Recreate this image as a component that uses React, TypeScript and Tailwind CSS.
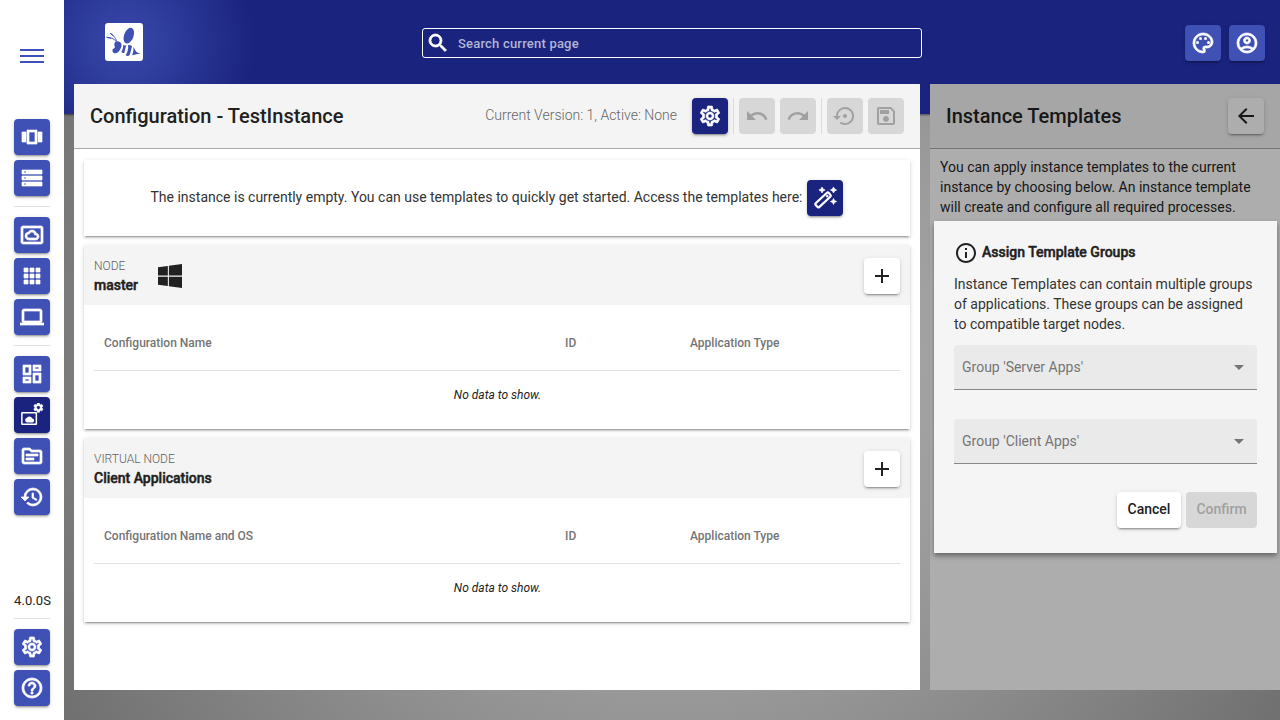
import type { ReactNode } from 'react';
import {
  MdAdd, MdApps, MdArrowBack, MdArrowDropDown, MdHistory, MdHelpOutline, MdOutlineAccountCircle,
  MdOutlineComputer, MdOutlineDashboard, MdOutlineInfo, MdOutlinePalette,
  MdOutlineSave, MdOutlineSettings, MdOutlineSettingsSystemDaydream, MdOutlineSource,
  MdOutlineViewCarousel, MdRedo, MdSearch, MdSettingsBackupRestore, MdStorage, MdUndo,
} from 'react-icons/md';

const tones = {
  primary: 'bg-[#3f51b5] text-white shadow-[0_3px_1px_-2px_rgba(0,0,0,.2),0_2px_2px_0_rgba(0,0,0,.14),0_1px_5px_0_rgba(0,0,0,.12)] [&_path:not([fill=none])]:[stroke-width:.7]',
  dark: 'bg-[#1a237e] text-white shadow-[0_3px_1px_-2px_rgba(0,0,0,.2),0_2px_2px_0_rgba(0,0,0,.14),0_1px_5px_0_rgba(0,0,0,.12)] [&_path:not([fill=none])]:[stroke-width:.7]',
  plain: 'bg-white text-[#212121] shadow-[0_3px_1px_-2px_rgba(0,0,0,.2),0_2px_2px_0_rgba(0,0,0,.14),0_1px_5px_0_rgba(0,0,0,.12)]',
  dim: 'bg-[#adadad] text-[#171717] shadow-[0_3px_1px_-2px_rgba(0,0,0,.2),0_2px_2px_0_rgba(0,0,0,.14),0_1px_5px_0_rgba(0,0,0,.12)]',
  disabled: 'bg-[#d7d7d7] text-[#a0a0a0]',
};

function IconButton({ tone = 'primary', children }: { tone?: keyof typeof tones; children: ReactNode }) {
  return (
    <button className={`flex size-9 shrink-0 items-center justify-center rounded text-2xl ${tones[tone]}`}>
      {children}
    </button>
  );
}

function InstanceSettingsIcon() {
  return (
    <svg viewBox="0 0 24 24" className="size-6" fill="currentColor">
      <path fillRule="evenodd" d="M2.200 9h13.800q1.100 0 1.100 1.100v10.800q0 1.100-1.100 1.100H2.200q-1.100 0-1.100-1.100V10.100Q1.100 9 2.200 9zM2.600 10.500v10h13v-10z" />
      <path d="M12.300 15.600a3 3 0 0 0-5.600-.5 2.200 2.200 0 0 0 .3 4.300h5.200a1.900 1.900 0 0 0 .1-3.800z" />
      <g transform="translate(12.400 -1.400) scale(.5)">
        <path fillRule="evenodd" d="M19.140 12.940c.04-.3.06-.61.06-.94 0-.32-.02-.64-.07-.94l2.030-1.580a.49.49 0 0 0 .12-.61l-1.920-3.320a.488.488 0 0 0-.59-.22l-2.390.96c-.5-.38-1.030-.7-1.620-.94l-.36-2.540a.484.484 0 0 0-.48-.41h-3.840c-.24 0-.43.17-.47.41l-.36 2.540c-.59.24-1.130.57-1.620.94l-2.390-.96c-.22-.08-.47 0-.59.22L2.740 8.870c-.12.21-.08.47.12.61l2.030 1.580c-.05.3-.09.63-.09.94s.02.64.07.94l-2.030 1.580a.49.49 0 0 0-.12.61l1.920 3.320c.12.22.37.29.59.22l2.390-.96c.5.38 1.030.7 1.620.94l.36 2.540c.05.24.24.41.48.41h3.840c.24 0 .44-.17.47-.41l.36-2.540c.59-.24 1.130-.56 1.620-.94l2.390.96c.22.08.47 0 .59-.22l1.920-3.320c.12-.22.07-.47-.12-.61l-2.010-1.580zM12 15.600A3.610 3.610 0 0 1 8.400 12c0-1.980 1.620-3.600 3.600-3.600s3.600 1.620 3.600 3.600-1.620 3.600-3.600 3.600z" stroke="currentColor" />
      </g>
    </svg>
  );
}

function WandIcon() {
  return (
    <svg viewBox="0 0 24 24" className="size-6" fill="currentColor">
      <rect x="1.200" y="11.300" width="17.800" height="5.200" rx="1.500" transform="rotate(-43 10.100 13.900)" fill="none" stroke="currentColor" strokeWidth="2.200" />
      <path d="M14.300 8.600l1.500 1.500-1.700 1.600-1.500-1.500z" />
      <path d="M9 1l1 2 2.100 1-2.100 1L9 7 8 5 5.900 4 8 3zM20.500 1l1 2 2.100 1-2.100 1-1 2-1-2-2.100-1 2.100-1zM20.500 12.500l1 2 2.100 1-2.100 1-1 2-1-2-2.100-1 2.100-1z" stroke="currentColor" />
    </svg>
  );
}

function BeeLogo() {
  return (
    <svg viewBox="0 0 38 38" className="size-[38px] rounded-[3px] bg-white" fill="#3f51b5">
      <ellipse cx="23.800" cy="12.700" rx="4.700" ry="8.200" transform="rotate(21 23.800 12.700)" />
      <path d="M10.300 18.700c3-1.400 5.900.2 6.200 3 .2 3-2.400 7.500-5.400 8.500-2.700.6-4.400-1.700-3.300-4.200 1.500-.3 2.400-1.400 1.900-2.700-.4-1-.8-2.800.6-4.600z" />
      <path d="M18.200 22c1.200.5 2.100.5 3.300.2-1.500 2.800-1.700 5-2 7.600-1.200.4-2.300.1-3.200-.7 1.300-2.200 1.900-4.400 1.900-7.100z" />
      <path d="M23 21.900c1.500-.1 2.900.2 4.100 1.100-.9 3-1.200 5.800-2.800 9.600-1.400.5-2.700.3-3.700-.4 2.200-3.400 2.900-6.700 2.400-10.300z" />
      <path d="M28.300 24.100c1.500 2 2.300 4.900 4.400 5.700l3 .9-3.300.3c-2 .1-3 1.400-5.300 1.100 1.300-2.300 1.500-5.300 1.200-8z" />
      <path d="M1.500 14.400c4.300.1 6.900 1 9.500 3.700M5 10.200c3 1.500 5.200 3.800 6.600 7.600" fill="none" stroke="#3f51b5" strokeWidth=".9" />
      <path d="M1.700 13.800l4.500.9v1l-4.300-.6zM5.400 9.700l3.200 2.500-.5.900L5 10.500z" />
    </svg>
  );
}

function Sidebar() {
  return (
    <aside className="z-10 flex w-16 shrink-0 flex-col items-center bg-white pt-[49px] pb-3.5">
      <div className="flex h-3.5 w-6 flex-col justify-between">
        <span className="h-0.5 bg-[#3f51b5]" /><span className="h-0.5 bg-[#3f51b5]" /><span className="h-0.5 bg-[#3f51b5]" />
      </div>
      <nav className="mt-14 flex flex-col gap-[5px]">
        <IconButton><MdOutlineViewCarousel /></IconButton>
        <IconButton><MdStorage /></IconButton>
        <hr className="my-[5px] border-t border-[#e0e0e0]" />
        <IconButton><MdOutlineSettingsSystemDaydream /></IconButton>
        <IconButton><MdApps /></IconButton>
        <IconButton><MdOutlineComputer /></IconButton>
        <hr className="my-[5px] border-t border-[#e0e0e0]" />
        <IconButton><MdOutlineDashboard /></IconButton>
        <IconButton tone="dark"><InstanceSettingsIcon /></IconButton>
        <IconButton><MdOutlineSource /></IconButton>
        <IconButton><MdHistory /></IconButton>
      </nav>
      <div className="mt-auto flex w-9 flex-col gap-[5px]">
        <span className="text-[13px] leading-4 tracking-[.1px] whitespace-nowrap">4.0.0S</span>
        <hr className="mt-[4px] mb-[5px] border-t border-[#e0e0e0]" />
        <IconButton><MdOutlineSettings /></IconButton>
        <IconButton><MdHelpOutline /></IconButton>
      </div>
    </aside>
  );
}

function Header() {
  return (
    <header className="flex h-[114px] items-start bg-[radial-gradient(circle_at_62px_42px,#3949ab_0,#1a237e_130px)] pr-[15px] pl-[41px] shadow-[0_1px_2px_rgba(0,0,0,.5)]">
      <div className="mt-[23px]"><BeeLogo /></div>
      <div className="mt-7 ml-[279px] flex h-[30px] w-[500px] items-center rounded-[3px] border border-white pl-[3px]">
        <MdSearch className="size-6 text-white [&_path:not([fill=none])]:[stroke-width:.8]" />
        <span className="ml-2 pt-px text-[13px] font-medium tracking-[.2px] text-[#b3b6d5]">Search current page</span>
      </div>
      <div className="mt-[25px] ml-auto flex gap-2">
        <IconButton><MdOutlinePalette /></IconButton>
        <IconButton><MdOutlineAccountCircle /></IconButton>
      </div>
    </header>
  );
}

function NodeCard({ kind, name, column, icon }: { kind: string; name: string; column: string; icon?: ReactNode }) {
  return (
    <section className="h-[184px] bg-white shadow-[0_3px_1px_-2px_rgba(0,0,0,.2),0_2px_2px_0_rgba(0,0,0,.14),0_1px_5px_0_rgba(0,0,0,.12)]">
      <div className="flex h-[60px] items-center bg-[#f4f4f4] px-2.5 pt-0.5">
        <div>
          <div className="text-xs leading-5 font-light text-[#606060]">{kind}</div>
          <div className="pb-0.5 text-sm leading-[18px] font-medium [-webkit-text-stroke:.45px_currentColor]">{name}</div>
        </div>
        {icon}
        <div className="ml-auto"><IconButton tone="plain"><MdAdd /></IconButton></div>
      </div>
      <div className="mx-2.5 grid h-[66px] grid-cols-[461px_125px_1fr] items-center border-b border-[#e0e0e0] pt-[11px] pl-2.5 text-xs font-medium text-[#757575]">
        <span>{column}</span><span>ID</span><span>Application Type</span>
      </div>
      <div className="pt-[14px] pl-px text-center text-xs leading-5 italic">No data to show.</div>
    </section>
  );
}

function ConfigurationPanel() {
  return (
    <main className="flex w-[846px] flex-col bg-white">
      <div className="flex h-[65px] items-center border-b border-[#a8a8a8] bg-[#f4f4f4] px-4">
        <h1 className="text-xl font-medium">Configuration - TestInstance</h1>
        <span className="ml-auto pb-0.5 text-sm font-light text-[#666]">Current Version: 1, Active: None</span>
        <div className="ml-[15px] flex gap-[5px]">
          <IconButton tone="dark"><MdOutlineSettings /></IconButton>
          <span className="w-px bg-[#dcdcdc]" />
          <IconButton tone="disabled"><MdUndo /></IconButton>
          <IconButton tone="disabled"><MdRedo /></IconButton>
          <span className="w-px bg-[#dcdcdc]" />
          <IconButton tone="disabled"><MdSettingsBackupRestore /></IconButton>
          <IconButton tone="disabled"><MdOutlineSave /></IconButton>
        </div>
      </div>
      <div className="flex flex-col gap-[9px] px-2.5 pt-[11px]">
        <section className="flex h-[76px] items-center justify-center gap-[5px] text-sm text-[#333] shadow-[0_3px_1px_-2px_rgba(0,0,0,.2),0_2px_2px_0_rgba(0,0,0,.14),0_1px_5px_0_rgba(0,0,0,.12)]">
          <span className="pb-0.5">The instance is currently empty. You can use templates to quickly get started. Access the templates here:</span>
          <IconButton tone="dark"><WandIcon /></IconButton>
        </section>
        <NodeCard kind="NODE" name="master" column="Configuration Name" icon={
          <svg viewBox="0 32 448 448" className="ml-5 size-6" fill="#212121">
            <path d="M0 93.700l183.600-25.300v177.400H0V93.700zm0 324.600l183.600 25.300V268.400H0v149.900zm203.800 28L448 480V268.400H203.800v177.900zm0-380.600v180.100H448V32L203.800 65.700z" />
          </svg>
        } />
        <NodeCard kind="VIRTUAL NODE" name="Client Applications" column="Configuration Name and OS" />
      </div>
    </main>
  );
}

function GroupSelect({ label }: { label: string }) {
  return (
    <div className="flex h-[45px] items-center rounded-t border-b border-[#878787] bg-[#eaeaea] pr-1.5 pl-2 text-[#757575]">
      <span>{label}</span>
      <MdArrowDropDown className="ml-auto size-6" />
    </div>
  );
}

function AssignDialog() {
  return (
    <div className="absolute top-[137px] left-1 flex h-[332px] w-[343px] flex-col bg-[#f5f5f5] px-5 pt-5 text-sm leading-5 text-[#212121] shadow-[0_3px_5px_rgba(0,0,0,.4)]">
      <div className="flex h-6 items-center gap-[4px]">
        <MdOutlineInfo className="size-6" />
        <h2 className="pb-0.5 font-medium [-webkit-text-stroke:.45px_currentColor]">Assign Template Groups</h2>
      </div>
      <p className="mt-[9px] whitespace-nowrap text-[#333]">Instance Templates can contain multiple groups<br />of applications. These groups can be assigned<br />to compatible target nodes.</p>
      <div className="mt-[11px] flex flex-col gap-[29px]">
        <GroupSelect label="Group 'Server Apps'" />
        <GroupSelect label="Group 'Client Apps'" />
      </div>
      <div className="mt-7 flex justify-end gap-[5px] font-medium">
        <button className={`h-9 w-16 rounded pb-0.5 ${tones.plain}`}>Cancel</button>
        <button className={`h-9 w-[71px] rounded pb-0.5 ${tones.disabled}`}>Confirm</button>
      </div>
    </div>
  );
}

function TemplatesPanel() {
  return (
    <aside className="relative flex-1 bg-[#adadad] text-[#171717]">
      <div className="flex h-[65px] items-center justify-between border-b border-[#777] bg-[#a6a6a6] px-4">
        <h1 className="text-xl font-medium">Instance Templates</h1>
        <IconButton tone="dim"><MdArrowBack /></IconButton>
      </div>
      <p className="px-2.5 pt-[8px] text-sm leading-5">You can apply instance templates to the current<br />instance by choosing below. An instance template<br />will create and configure all required processes.</p>
      <AssignDialog />
    </aside>
  );
}

export default function App() {
  return (
    <div className="flex h-[720px] w-[1280px] overflow-hidden font-[Roboto,sans-serif] text-[#212121]">
      <Sidebar />
      <div className="flex flex-1 flex-col bg-[radial-gradient(circle_at_center,#bdbdbd,#707070)]">
        <Header />
        <div className="-mt-[30px] flex h-[606px] gap-2.5 pl-2.5">
          <ConfigurationPanel />
          <TemplatesPanel />
        </div>
      </div>
    </div>
  );
}
